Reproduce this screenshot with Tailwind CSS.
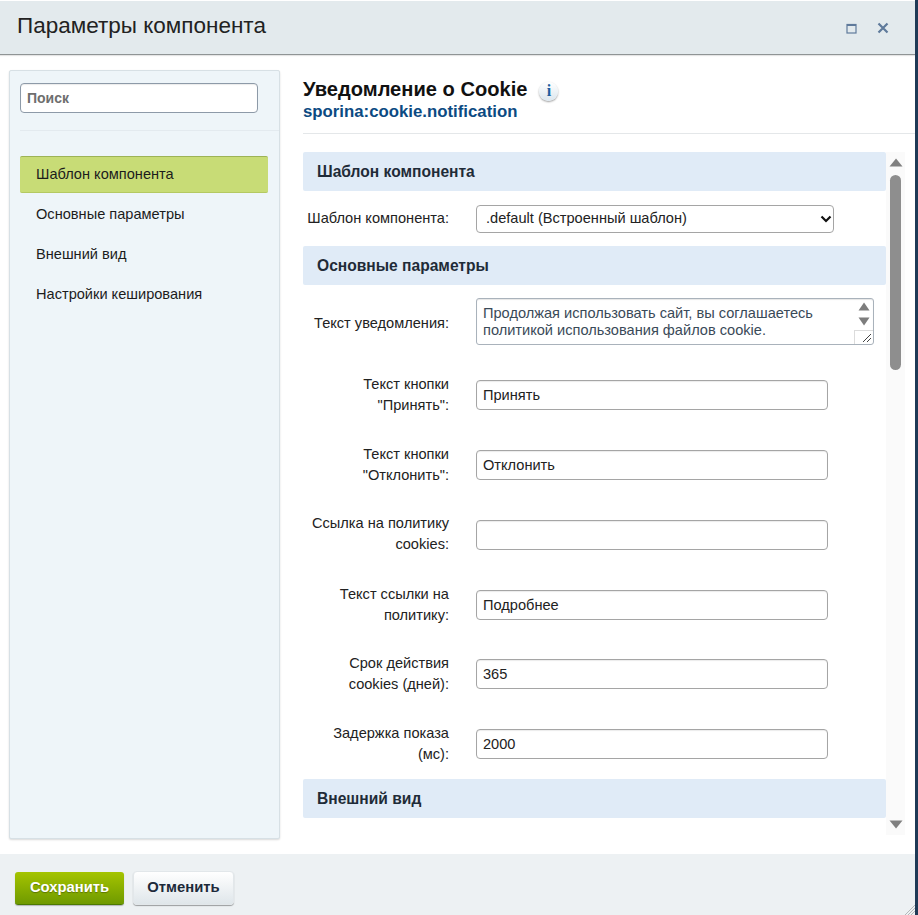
<!DOCTYPE html>
<html lang="ru">
<head>
    <meta charset="UTF-8">
    <meta name="viewport" content="width=device-width, initial-scale=1.0">
    <title>Параметры компонента</title>
    <script src="https://cdn.jsdelivr.net/npm/@tailwindcss/browser@4"></script>
</head>
<body class="bg-[#1f3a56]">
    <div class="w-[915px] h-[915px] overflow-hidden bg-white flex flex-col font-['Liberation_Sans',Arial,sans-serif] text-[14.6px] text-black">
        <!-- Header -->
        <div class="h-[54px] shrink-0 mt-px bg-[#e3eaed] border-b border-[#8f9495] shadow-[0_1px_1px_rgba(0,0,0,0.1)] flex items-center pl-[17px] pr-[26px]">
            <h1 class="text-[22.5px] text-[#222] flex-1 -mt-[3px]">Параметры компонента</h1>
            <svg width="11" height="11" viewBox="0 0 11 11" class="mr-[20px] mt-px" fill="none" stroke="#5f7a9b">
                <rect x="1" y="1.5" width="9" height="8.5" stroke-width="1.2"/>
                <path d="M1 2h9" stroke-width="2"/>
            </svg>
            <svg width="12" height="12" viewBox="0 0 12 12" class="mt-px" fill="none" stroke="#5f7a9b" stroke-width="2.2">
                <path d="M1.5 1.5l9 9M10.5 1.5l-9 9"/>
            </svg>
        </div>

        <!-- Body -->
        <div class="flex-1 flex min-h-0 pl-[9px] pt-[15px]">
            <!-- Sidebar -->
            <div class="w-[271px] h-[769px] shrink-0 bg-[#eef5f9] border border-[#d7e0e5] rounded-[2px] shadow-[0_1px_2px_rgba(0,0,0,0.15)] pt-[12px]">
                <div class="ml-[10px] pb-[17px] border-b border-[#e3eaef]">
                    <input type="text" placeholder="Поиск" class="w-[238px] h-[30px] block bg-white border border-[#8d9aa8] rounded-[4px] px-[6px] text-[14px] font-bold placeholder:text-[#6e6e6e] shadow-[inset_0_1px_1px_rgba(0,0,0,0.08)]">
                </div>
                <nav class="mt-[25px] ml-[10px] w-[248px]">
                    <a class="h-[37px] flex items-center pl-[16px] bg-[#c8dc76] border-t border-[#9db356] border-b-[#b4c962] border-b rounded-[2px] mb-[2px] text-[#1c1c1c]">Шаблон компонента</a>
                    <a class="h-[40px] flex items-center pl-[16px] text-[#1c1c1c]">Основные параметры</a>
                    <a class="h-[40px] flex items-center pl-[16px] text-[#1c1c1c]">Внешний вид</a>
                    <a class="h-[40px] flex items-center pl-[16px] text-[#1c1c1c]">Настройки кеширования</a>
                </nav>
            </div>

            <!-- Main -->
            <div class="flex-1 pl-[23px] min-w-0">
                <div class="h-[64px] border-b border-[#e4e7e9] w-[630px] pt-[9px]">
                    <div class="flex items-center h-[20px]">
                        <span class="text-[20.1px] font-bold text-[#111]">Уведомление о Cookie</span>
                        <span class="ml-[12px] mt-[4px] w-[19px] h-[19px] rounded-full bg-gradient-to-b from-[#ffffff] to-[#dbe6ee] shadow-[0_1px_2px_rgba(0,0,0,0.4)] flex items-center justify-center font-['Liberation_Serif',serif] font-bold text-[16px] text-[#1d5f9e]">i</span>
                    </div>
                    <div class="text-[16.8px] font-bold text-[#0c4a82] leading-[17px] mt-[4px]">sporina:cookie.notification</div>
                </div>

                <div class="flex mt-[18px]">
                    <!-- Form -->
                    <div class="w-[583px] h-[680px] overflow-hidden shrink-0">
                        <div class="h-[39px] bg-[#e0ebf7] rounded-[2px] flex items-center pl-[14px] font-bold text-[#1f2b38] text-[15.6px]">Шаблон компонента</div>
                        <div class="flex items-center mt-[14px] h-[28px]">
                            <label class="w-[146px] text-right text-[#222]">Шаблон компонента:</label>
                            <div class="ml-[27px] w-[358px] h-[28px] relative">
                                <select class="appearance-none w-full h-full bg-white border border-[#a5a5a5] rounded-[4px] pl-[9px] text-[14.6px] text-[#222]">
                                    <option>.default (Встроенный шаблон)</option>
                                </select>
                                <svg width="12" height="8" viewBox="0 0 12 8" class="absolute right-[2px] top-[10px]" fill="none" stroke="#111" stroke-width="2.2"><path d="M1.5 1.5L6 6l4.5-4.5"/></svg>
                            </div>
                        </div>

                        <div class="h-[39px] mt-[13px] bg-[#e0ebf7] rounded-[2px] flex items-center pl-[14px] font-bold text-[#1f2b38] text-[15.6px]">Основные параметры</div>
                        <div class="flex mt-[13px] h-[47px]">
                            <label class="w-[146px] text-right text-[#222] pt-[15px] leading-[21px]">Текст уведомления:</label>
                            <div class="ml-[27px] w-[398px] h-[47px] bg-white border border-[#a9b2bb] rounded-[3px] flex overflow-hidden shadow-[inset_0_1px_1px_rgba(0,0,0,0.1)]">
                                <div class="flex-1 pl-[6px] pt-[6px] leading-[17px] text-[#3a4a58]">Продолжая использовать сайт, вы соглашаетесь политикой использования файлов cookie.</div>
                                <div class="w-[19px] flex flex-col items-center pt-[3px] shrink-0">
                                    <svg width="12" height="9" viewBox="0 0 12 9"><path d="M6 0.5L11.5 8.5H0.5z" fill="#7d7d7d"/></svg>
                                    <svg width="12" height="9" viewBox="0 0 12 9" class="mt-[6px]"><path d="M0.5 0.5H11.5L6 8.5z" fill="#7d7d7d"/></svg>
                                    <div class="mt-[4px] w-[19px] flex-1 border-t border-l border-[#dcdcdc] relative">
                                        <svg width="10" height="10" viewBox="0 0 10 10" class="absolute right-[1px] bottom-[1px]" fill="none" stroke="#444" stroke-width="1"><path d="M1 9L9 1M5 9L9 5"/></svg>
                                    </div>
                                </div>
                            </div>
                        </div>

                        <!-- Text rows -->
                        <div class="flex mt-[35px] h-[49px]">
                            <label class="w-[146px] text-right text-[#222] leading-[21px] -mt-[6px]">Текст кнопки<br>"Принять":</label>
                            <input type="text" value="Принять" class="ml-[27px] w-[352px] h-[30px] border border-[#a5a5a5] rounded-[4px] px-[6px] text-[14.6px] text-[#222] bg-white shadow-[inset_0_1px_1px_rgba(0,0,0,0.08)]">
                        </div>
                        <div class="flex mt-[21px] h-[49px]">
                            <label class="w-[146px] text-right text-[#222] leading-[21px] -mt-[6px]">Текст кнопки<br>"Отклонить":</label>
                            <input type="text" value="Отклонить" class="ml-[27px] w-[352px] h-[30px] border border-[#a5a5a5] rounded-[4px] px-[6px] text-[14.6px] text-[#222] bg-white shadow-[inset_0_1px_1px_rgba(0,0,0,0.08)]">
                        </div>
                        <div class="flex mt-[21px] h-[49px]">
                            <label class="w-[146px] text-right text-[#222] leading-[21px] -mt-[7px]">Ссылка на политику<br>cookies:</label>
                            <input type="text" class="ml-[27px] w-[352px] h-[30px] border border-[#a5a5a5] rounded-[4px] px-[6px] text-[14.6px] text-[#222] bg-white shadow-[inset_0_1px_1px_rgba(0,0,0,0.08)]">
                        </div>
                        <div class="flex mt-[21px] h-[49px]">
                            <label class="w-[146px] text-right text-[#222] leading-[21px] -mt-[6px]">Текст ссылки на<br>политику:</label>
                            <input type="text" value="Подробнее" class="ml-[27px] w-[352px] h-[30px] border border-[#a5a5a5] rounded-[4px] px-[6px] text-[14.6px] text-[#222] bg-white shadow-[inset_0_1px_1px_rgba(0,0,0,0.08)]">
                        </div>
                        <div class="flex mt-[20px] h-[49px]">
                            <label class="w-[146px] text-right text-[#222] leading-[21px] -mt-[6px]">Срок действия<br>cookies (дней):</label>
                            <input type="text" value="365" class="ml-[27px] w-[352px] h-[30px] border border-[#a5a5a5] rounded-[4px] px-[6px] text-[14.6px] text-[#222] bg-white shadow-[inset_0_1px_1px_rgba(0,0,0,0.08)]">
                        </div>
                        <div class="flex mt-[21px] h-[49px]">
                            <label class="w-[146px] text-right text-[#222] leading-[21px] -mt-[6px]">Задержка показа<br>(мс):</label>
                            <input type="text" value="2000" class="ml-[27px] w-[352px] h-[30px] border border-[#a5a5a5] rounded-[4px] px-[6px] text-[14.6px] text-[#222] bg-white shadow-[inset_0_1px_1px_rgba(0,0,0,0.08)]">
                        </div>

                        <div class="h-[39px] mt-[1px] bg-[#e0ebf7] rounded-[2px] flex items-center pl-[14px] font-bold text-[#1f2b38] text-[15.6px]">Внешний вид</div>
                    </div>

                    <!-- Scrollbar -->
                    <div class="w-[19px] h-[683px] bg-[#fafafa] flex flex-col items-center pt-[6px] shrink-0">
                        <svg width="14" height="9" viewBox="0 0 14 9"><path d="M7 0.5L13.5 8.5H0.5z" fill="#808080"/></svg>
                        <div class="w-[11px] h-[195px] mt-[8px] rounded-full bg-[#8e8e8e]"></div>
                        <svg width="14" height="9" viewBox="0 0 14 9" class="mt-[450px]"><path d="M0.5 0.5H13.5L7 8.5z" fill="#808080"/></svg>
                    </div>
                </div>
            </div>
        </div>

        <!-- Footer -->
        <div class="h-[61px] shrink-0 bg-[#edf1f3] flex items-start pl-[15px] pt-[18px] relative">
            <button class="w-[109px] h-[33px] pb-[2px] rounded-[3px] bg-gradient-to-b from-[#a5c400] to-[#6f9a00] border-b border-[#4c7a00] shadow-[0_1px_1px_rgba(0,0,0,0.25)] text-white font-bold text-[14.8px] [text-shadow:0_1px_1px_rgba(0,0,0,0.3)]">Сохранить</button>
            <button class="w-[101px] h-[34px] pb-[2px] ml-[9px] -mt-px rounded-[4px] bg-gradient-to-b from-[#ffffff] to-[#dfe6ea] border border-[#e2e7ea] shadow-[0_1px_1px_rgba(0,0,0,0.35)] text-[#1d2a3a] font-bold text-[14.8px]">Отменить</button>
            <svg width="10" height="10" viewBox="0 0 10 10" class="absolute right-0 bottom-0" fill="none" stroke="#b4b8ba"><path d="M0 10L10 0M3 10L10 3M6 10L10 6"/></svg>
        </div>
    </div>
</body>
</html>
